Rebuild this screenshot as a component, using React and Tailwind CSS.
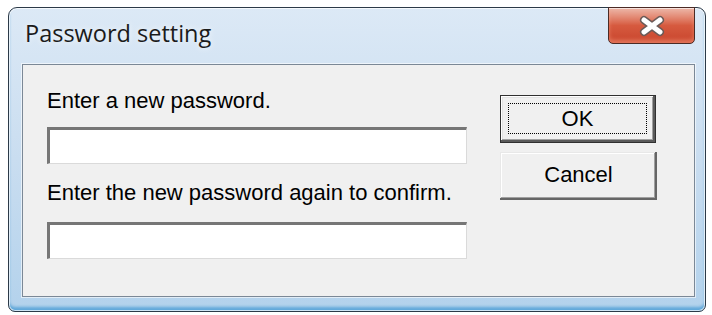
import React from 'react'

// Classic sunken text box
function PasswordBox() {
  return (
    <input
      type="password"
      className="w-[420px] h-[37px] bg-white border-t-[3px] border-l-[3px] border-r border-b border-t-[#767676] border-l-[#767676] border-r-[#dadada] border-b-[#dadada] outline-none"
    />
  )
}

// Red close button of the Vista frame
function CloseButton() {
  return (
    <div className="-mt-px mr-[10px] w-[87px] h-[37px] rounded-b-[5px] border border-[#4b2b25] bg-gradient-to-b from-[#ecb8aa] via-[#d65a3f] to-[#c8442c] shadow-[inset_0_1px_0_rgba(255,255,255,0.6),inset_0_-3px_4px_rgba(255,170,140,0.5)] flex items-center justify-center">
      <svg width="32" height="22" viewBox="0 0 32 22">
        <path d="M8 5 L24 17 M24 5 L8 17" stroke="#6b5a57" strokeWidth="8" strokeLinecap="round" />
        <path d="M8 5 L24 17 M24 5 L8 17" stroke="#ffffff" strokeWidth="5" strokeLinecap="round" />
      </svg>
    </div>
  )
}

export default function App() {
  return (
    <div className="w-[712px] h-[315px] bg-white pt-[7px] pl-[8px] overflow-hidden">
      <div className="w-[698px] h-[305px] flex flex-col rounded-t-[9px] rounded-b-[7px] border border-[#2c3a48] bg-gradient-to-b from-[#dce9f6] via-[#c9ddf0] to-[#b3d2ec] shadow-[inset_0_0_0_1px_rgba(255,255,255,0.7),inset_0_-4px_3px_rgba(60,150,210,0.7)]">
        {/* Title bar */}
        <div className="h-[56px] flex justify-between items-start">
          <div className="pt-[10px] pl-[16px] text-[23.5px] leading-[30px] text-[#1b1b1b] [font-family:'Open_Sans',sans-serif] [text-shadow:0_0_6px_rgba(255,255,255,0.9)]">
            Password setting
          </div>
          <CloseButton />
        </div>

        {/* Client area */}
        <div className="flex-1 ml-[13px] mr-[10px] mb-[14px] border border-[#7b8896] bg-[#f0f0f0] shadow-[0_0_0_1px_rgba(255,255,255,0.6)] flex [font-family:'Liberation_Sans',Arial,sans-serif] text-[22px] leading-[26px] text-black">
          <div className="pl-[24px] pt-[23px] flex flex-col">
            <div>Enter a new password.</div>
            <div className="mt-[13px]">
              <PasswordBox />
            </div>
            <div className="mt-[16px]">Enter the new password again to confirm.</div>
            <div className="mt-[16px]">
              <PasswordBox />
            </div>
          </div>

          <div className="ml-[33px] pt-[30px] flex flex-col gap-[9px]">
            <button
              type="button"
              className="w-[156px] h-[48px] border border-[#303030] bg-[#f0f0f0] shadow-[inset_-2px_-2px_0_#5a5a5a,inset_1px_1px_0_#ffffff,inset_-3px_-3px_0_#a0a0a0,inset_2px_2px_0_#e3e3e3] p-[7px] pb-[8px] pr-[8px]"
            >
              <div className="w-full h-full border border-dotted border-black flex items-center justify-center">
                OK
              </div>
            </button>
            <button
              type="button"
              className="w-[157px] h-[48px] bg-[#f0f0f0] shadow-[inset_-2px_-2px_0_#666666,inset_1px_1px_0_#e8e8e8,inset_-3px_-3px_0_#a0a0a0,inset_2px_2px_0_#ffffff] flex items-center justify-center pb-[3px]"
            >
              Cancel
            </button>
          </div>
        </div>
      </div>
    </div>
  )
}
